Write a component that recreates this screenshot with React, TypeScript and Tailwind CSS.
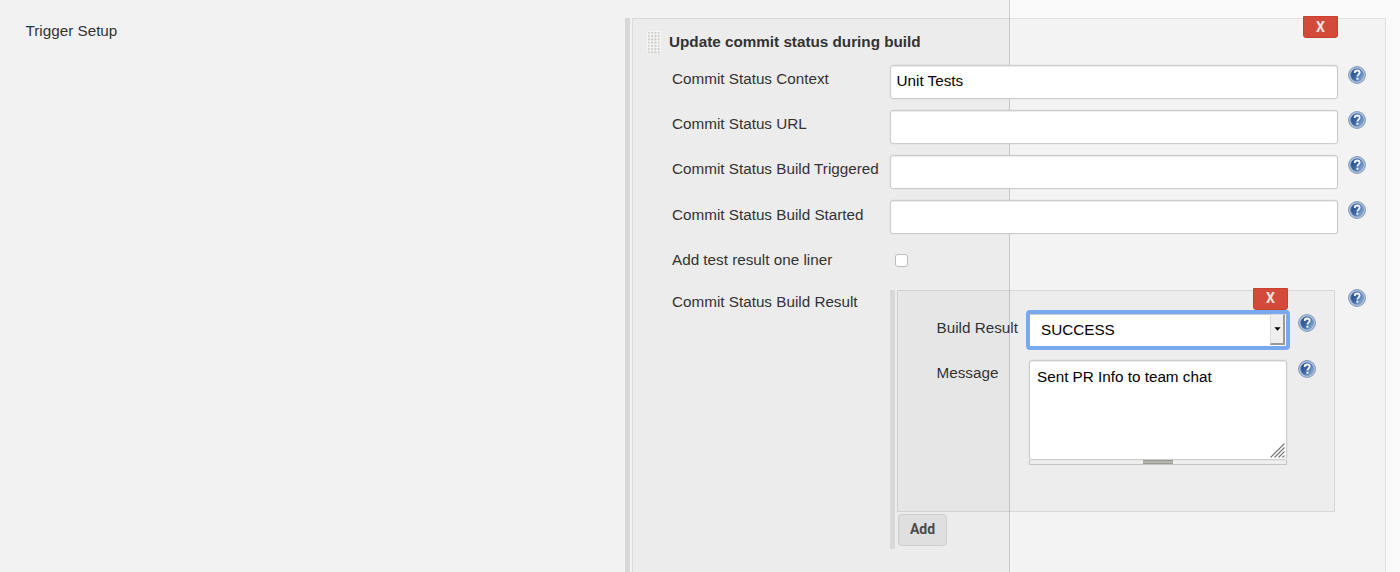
import type { ReactNode } from 'react';

function HelpIcon() {
  return (
    <svg width="18" height="18" viewBox="0 0 18 18" className="block shrink-0" aria-label="Help">
      <defs>
        <linearGradient id="helpFill" x1="0" y1="0.2" x2="1" y2="0.8">
          <stop offset="0.1" stopColor="#2a5191" />
          <stop offset="0.5" stopColor="#4169a4" />
          <stop offset="0.95" stopColor="#8aabd4" />
        </linearGradient>
      </defs>
      <circle cx="9" cy="9" r="8.4" fill="#b4c5de" stroke="#7c96bd" strokeWidth="1" />
      <circle cx="9" cy="9" r="6.4" fill="url(#helpFill)" stroke="#6f8fbd" strokeWidth="0.7" />
      <path
        d="M6.7 6.9C6.7 5.1 7.8 4.5 9.2 4.5C10.7 4.5 11.7 5.3 11.7 6.5C11.7 8.3 9.4 8.4 9.4 10.6"
        fill="none"
        stroke="#f4f7fb"
        strokeWidth="1.8"
      />
      <rect x="8.4" y="11.7" width="2" height="2" fill="#f4f7fb" />
    </svg>
  );
}

function DeleteButton() {
  return (
    <button className="flex h-[22px] w-[35px] items-center justify-center rounded-b-[3px] border border-[#c9402f] bg-[#d44a3a] pb-px font-[Roboto,sans-serif] text-[14px] font-bold leading-none text-[#f3e4e2]">
      X
    </button>
  );
}

function DragHandle() {
  return (
    <svg width="14" height="22" viewBox="0 0 14 22" className="block shrink-0">
      <defs>
        <pattern id="dots" width="3.25" height="3.25" patternUnits="userSpaceOnUse">
          <rect width="3.25" height="3.25" fill="#f6f6f5" />
          <rect x="1" y="1" width="1.8" height="1.8" fill="#c4c4c0" />
        </pattern>
      </defs>
      <rect width="14" height="22" fill="url(#dots)" />
    </svg>
  );
}

const fieldBox = 'rounded-[3px] border border-[#cccccc] bg-white shadow-[inset_0_1px_1px_rgba(0,0,0,0.08),0_0_0_0.5px_rgba(0,0,0,0.05)]';

function TextRow({ label, value }: { label: string; value?: string }) {
  return (
    <div className="flex h-[45.1px] items-start">
      <label className="w-[218px] shrink-0 whitespace-nowrap pt-[4.3px] leading-[20px]">{label}</label>
      <input
        type="text"
        defaultValue={value}
        className={`h-[34px] w-[448px] px-[5.5px] pb-[3px] text-black outline-none ${fieldBox}`}
      />
      <div className="ml-[10px] pt-[1.2px]">
        <HelpIcon />
      </div>
    </div>
  );
}

function Chunk({ children }: { children: ReactNode }) {
  return <div className="border-l-[5px] border-[#d8d8d8] pl-[2px]">{children}</div>;
}

function ResultPanel() {
  return (
    <Chunk>
      <div className="flex flex-col items-start pb-[3px]">
        <div className="relative h-[222px] w-[438px] border border-black/[0.09] bg-black/[0.025] pl-[38.5px]">
          <div className="absolute right-[46px] top-[-3px]">
            <DeleteButton />
          </div>
          <div className="flex items-start pt-[19px]">
            <label className="w-[89.5px] shrink-0 whitespace-nowrap pt-[8px] leading-[20px]">Build Result</label>
            <div className="flex h-[40px] w-[264px] rounded-[4px] border-4 border-[#78a9ef] bg-white">
              <div className="flex flex-1 items-center border-t border-[#c8cdd4] pl-[11px] text-black">
                SUCCESS
              </div>
              <div className="mb-px mr-px flex w-[15px] items-center justify-center border-b-2 border-l border-r-2 border-t border-b-[#999999] border-l-[#dcdcdc] border-r-[#999999] border-t-[#dcdcdc] bg-[#efefef]">
                <svg width="7" height="4" viewBox="0 0 8 4">
                  <path d="M0.5 0H7.5L4 4Z" fill="#000000" />
                </svg>
              </div>
            </div>
            <div className="ml-[8px] pt-[4px]">
              <HelpIcon />
            </div>
          </div>
          <div className="flex items-start pt-[10px]">
            <label className="w-[92.5px] shrink-0 pt-[3px] leading-[20px]">Message</label>
            <div className="w-[258px]">
              <div className={`relative h-[100px] px-[7px] pt-[6px] leading-[20px] text-black ${fieldBox}`}>
                Sent PR Info to team chat
                <svg width="15" height="15" viewBox="0 0 15 15" className="absolute bottom-px right-px">
                  <path
                    d="M0.5 14.5L14.5 0.5M4.5 14.5L14.5 4.5M8.5 14.5L14.5 8.5M12.5 14.5L14.5 12.5"
                    stroke="#747474"
                    strokeWidth="1.1"
                  />
                </svg>
              </div>
              <div className="flex h-[5px] justify-center border border-t-0 border-[#c4c4c0] bg-[#eeeeec]">
                <div className="h-[4px] w-[30px] border-y border-[#9d9d98] bg-[#b4b4ae]" />
              </div>
            </div>
            <div className="ml-[11px]">
              <HelpIcon />
            </div>
          </div>
        </div>
        <button className="ml-px mt-[2px] h-[32px] w-[49px] rounded-[4px] border border-[#cdcdcd] bg-[#dfdfdf] font-[Roboto,sans-serif] text-[14px] font-bold text-[#4c4c4c]">
          Add
        </button>
      </div>
    </Chunk>
  );
}

export default function App() {
  return (
    <div className="flex h-[572px] w-[1400px] items-start overflow-hidden bg-[linear-gradient(to_right,#f2f2f2_1009px,#cccccc_1009px,#cccccc_1010px,#f9f9f9_1010px)] font-['Liberation_Sans',Arial,sans-serif] text-[15.25px] text-[#333333]">
      <div className="w-[625px] shrink-0 pl-[25.5px] pt-[21px] leading-[20px]">Trigger Setup</div>
      <div className="pt-[18px]">
        <Chunk>
          <div className="relative h-[560px] w-[754px] border border-black/[0.07] bg-black/[0.025]">
            <div className="absolute right-[47px] top-[-3px]">
              <DeleteButton />
            </div>
            <div className="flex h-[46px] items-start gap-[8px] pl-[14px] pt-[12px]">
              <DragHandle />
              <h2 className="font-bold leading-[22px]">Update commit status during build</h2>
            </div>
            <div className="pl-[39px]">
              <TextRow label="Commit Status Context" value="Unit Tests" />
              <TextRow label="Commit Status URL" />
              <TextRow label="Commit Status Build Triggered" />
              <TextRow label="Commit Status Build Started" />
              <div className="flex h-[44.6px] items-start">
                <label className="w-[223px] shrink-0 pt-[5px] leading-[20px]">Add test result one liner</label>
                <input
                  type="checkbox"
                  className="mt-[9px] h-[13px] w-[13px] appearance-none rounded-[3px] border border-[#bdbdbd] bg-white"
                />
              </div>
              <div className="flex items-start">
                <label className="w-[218px] shrink-0 whitespace-nowrap pt-[2px] leading-[20px]">
                  Commit Status Build Result
                </label>
                <ResultPanel />
                <div className="ml-[13px] mt-[-1px]">
                  <HelpIcon />
                </div>
              </div>
            </div>
          </div>
        </Chunk>
      </div>
    </div>
  );
}
